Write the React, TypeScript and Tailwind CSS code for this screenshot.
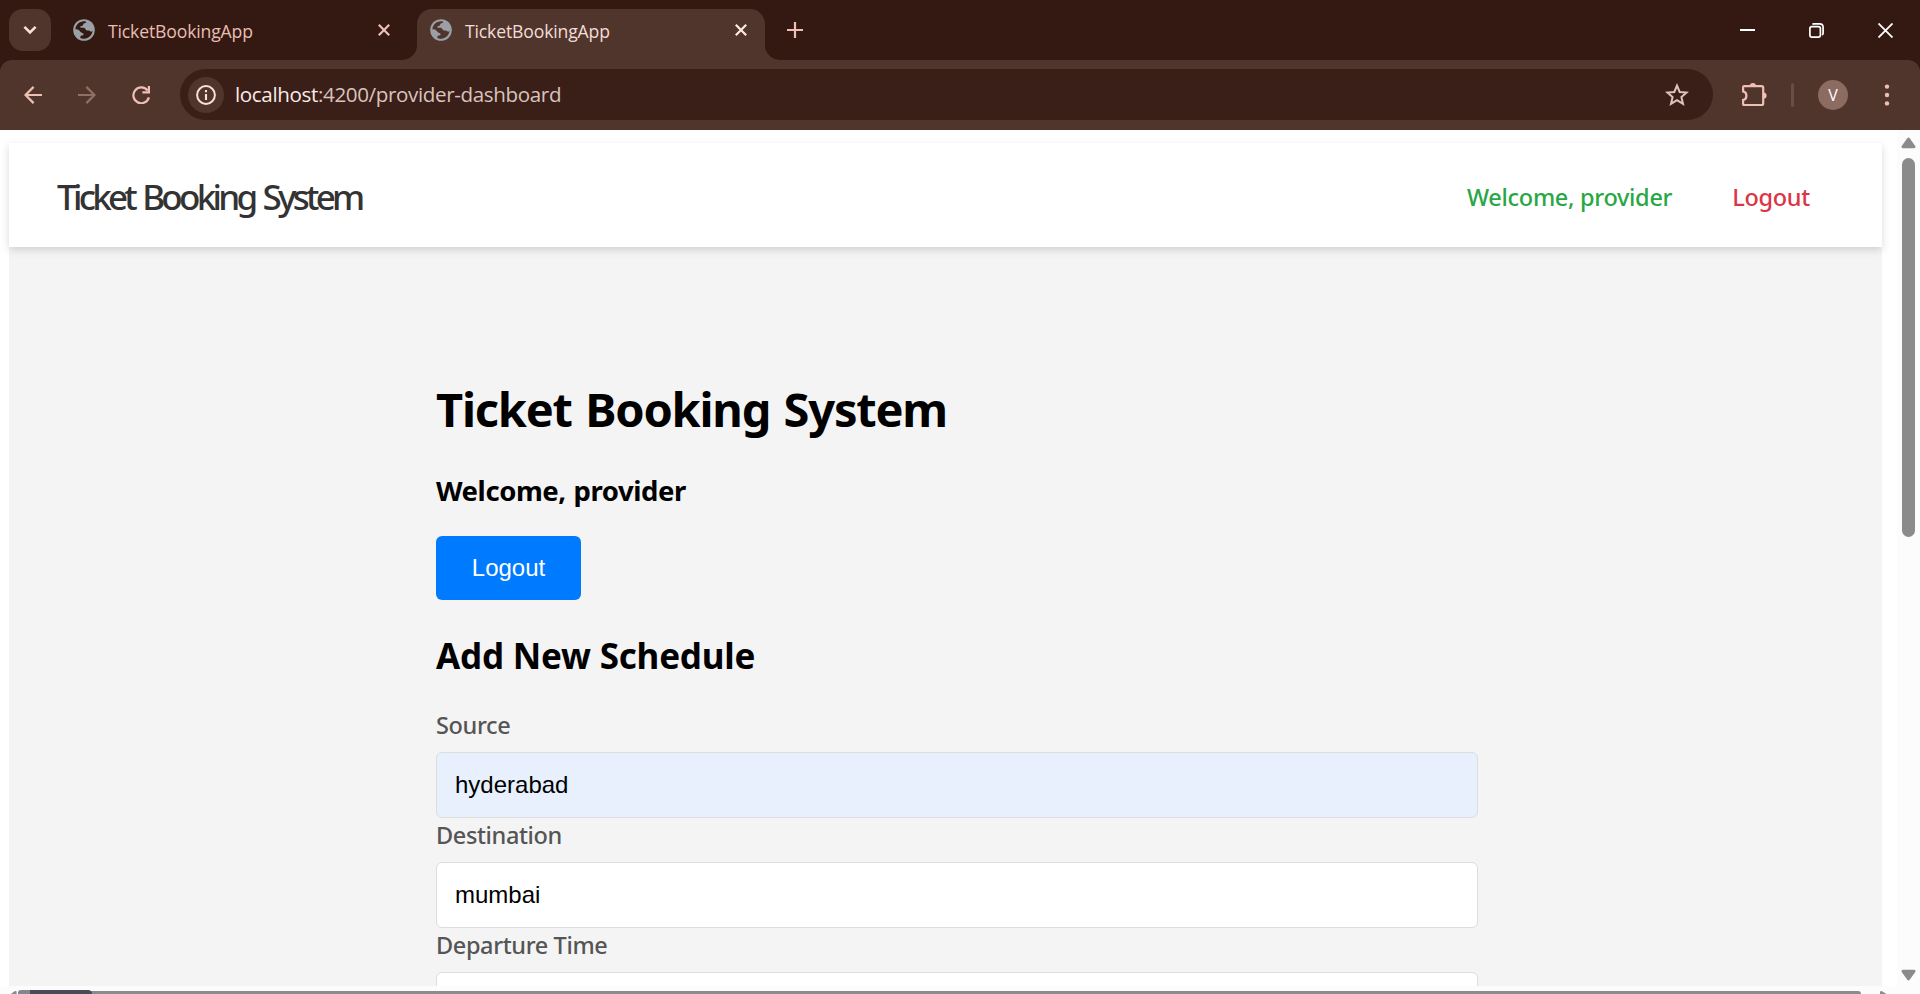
import type { ReactNode } from "react";

function Globe({ hole }: { hole: "dark" | "light" }) {
  const fill = hole === "dark" ? "fill-[#331912]" : "fill-[#50352d]";
  return (
    <svg viewBox="0 0 22 22" className="size-[22px] shrink-0">
      <circle cx="11" cy="11" r="10.8" className="fill-[#9aa0a6]" />
      <path
        className={fill}
        d="M2.4 10.2C2.8 5.6 6.4 2.3 11 2.2C12.4 2.2 13.2 2.6 13.3 3.3C13 4.3 11.6 4 10.8 4.6C10 5.3 10.4 6.3 9.4 6.8C8.4 7.2 7.2 7 7.1 8C7.2 9 9.2 8.6 10.9 8.8C12.6 9.2 12.2 10.6 13.2 11.2C14.6 11.8 16.4 11.2 17.2 12.2C18 12.9 18.6 12.8 19.6 11.8C19.2 16.2 15.6 19.6 11.2 19.7C9.6 19.7 8 19.4 7.2 18.7L7.6 17C8.6 16.4 10.2 16.8 10.6 15.6C10.8 14.2 9.4 14 8.4 13.4C6.8 12.6 6.2 10.8 4.8 10.4Z"
      />
    </svg>
  );
}

function Cross({ className }: { className: string }) {
  return (
    <svg viewBox="0 0 12 12" className={`size-3 shrink-0 ${className}`} fill="none" stroke="currentColor" strokeWidth="2.2">
      <path d="M0.8 0.8L11.2 11.2M11.2 0.8L0.8 11.2" />
    </svg>
  );
}

function TabTitle({ className }: { className: string }) {
  return (
    <span className={`ml-[13px] flex-1 pt-px text-[17.6px] leading-6 tracking-[-0.15px] whitespace-nowrap ${className}`}>
      TicketBookingApp
    </span>
  );
}

function TabStrip() {
  return (
    <div className="flex h-[60px] shrink-0 bg-[#50352d]">
      <div className="flex w-[417px] items-center rounded-br-[15px] bg-[#331912] pl-[9px]">
        <div className="flex size-[42px] items-center justify-center rounded-[14px] bg-[#50352d] text-[#f6e0da]">
          <svg viewBox="0 0 14 10" className="h-2.5 w-3.5" fill="none" stroke="currentColor" strokeWidth="2.6">
            <path d="M1.4 1.8L7 7.4L12.6 1.8" />
          </svg>
        </div>
        <div className="ml-[22px] flex flex-1 items-center pr-[27px]">
          <Globe hole="dark" />
          <TabTitle className="text-[#e8bfb3]" />
          <Cross className="text-[#efc1b5]" />
        </div>
      </div>
      <div className="flex w-[348px] bg-[#331912] pt-[9px]">
        <div className="flex flex-1 rounded-t-[15px] bg-[#50352d] pr-[18px] pb-[9px] pl-[13px]">
          <div className="flex flex-1 items-center">
            <Globe hole="light" />
            <TabTitle className="text-[#f3ddd6]" />
            <Cross className="text-[#fbeae4]" />
          </div>
        </div>
      </div>
      <div className="flex flex-1 items-center rounded-bl-[15px] bg-[#331912] pr-[27px] pl-[22px]">
        <svg viewBox="0 0 16 16" className="size-4 text-[#efbfb3]" fill="none" stroke="currentColor" strokeWidth="2.2">
          <path d="M8 0V16M0 8H16" />
        </svg>
        <div className="flex-1" />
        <div className="flex items-center gap-[54px] text-white">
          <svg viewBox="0 0 15 15" className="size-[15px]" stroke="currentColor" strokeWidth="2">
            <path d="M0 7H15" />
          </svg>
          <svg viewBox="0 0 15 15" className="size-[15px]" fill="none" stroke="currentColor" strokeWidth="1.7">
            <rect x="0.9" y="3.6" width="10.5" height="10.5" rx="2" />
            <path d="M3.4 1.4C4 0.9 4.4 0.9 5 0.9H10.6C12.6 0.9 14.1 2.4 14.1 4.4V10C14.1 10.6 14.1 11.4 13.2 12" />
          </svg>
          <svg viewBox="0 0 15 15" className="size-[15px]" stroke="currentColor" strokeWidth="1.8">
            <path d="M0.5 0.5L14.5 14.5M14.5 0.5L0.5 14.5" />
          </svg>
        </div>
      </div>
    </div>
  );
}

function Toolbar() {
  return (
    <div className="h-[70px] shrink-0 bg-[#331912]">
      <div className="flex h-full items-center rounded-t-[12px] bg-[#50352d] pl-6 text-[#efbfb3]">
        <svg viewBox="0 0 18 18" className="size-[18px]" fill="none" stroke="currentColor" strokeWidth="2.2">
          <path d="M18 9H2M9.6 0.9L1.5 9L9.6 17.1" />
        </svg>
        <svg viewBox="0 0 18 18" className="ml-9 size-[18px] text-[#906f67]" fill="none" stroke="currentColor" strokeWidth="2.2">
          <path d="M0 9H16M8.4 0.9L16.5 9L8.4 17.1" />
        </svg>
        <svg viewBox="0 0 18 18" className="ml-9 size-[18px]" fill="none" stroke="currentColor" strokeWidth="2.2">
          <path d="M15.6 4.6A7.9 7.9 0 1 0 16.9 11.4" />
          <path d="M16.9 0V6.3H10.4" />
        </svg>
        <div className="-mt-px ml-[30px] flex h-[51px] w-[1533px] items-center rounded-full bg-[#3a1f19] pr-[24px] pl-2">
          <div className="flex size-9 items-center justify-center rounded-full bg-[#50352d] text-[#f6e0da]">
            <svg viewBox="0 0 20 20" className="size-5">
              <circle cx="10" cy="10" r="8.9" fill="none" stroke="currentColor" strokeWidth="2" />
              <path d="M10 9V15M10 5V7.2" stroke="currentColor" strokeWidth="2.1" />
            </svg>
          </div>
          <div className="ml-[11px] flex-1 pb-px text-[20.6px] leading-7 tracking-[-0.37px] text-[#d9c3bc]">
            <span className="text-[#fbeae4]">localhost</span>:4200/provider-dashboard
          </div>
          <svg viewBox="0 0 24 24" className="size-6" fill="none" stroke="#dcc5be" strokeWidth="2">
            <path d="M12 2.6L14.7 9L21.6 9.6L16.4 14.1L18 20.9L12 17.2L6 20.9L7.6 14.1L2.4 9.6L9.3 9Z" />
          </svg>
        </div>
        <svg viewBox="0 0 26 26" className="-mt-[2px] ml-[28px] h-[26px] w-[26px]" fill="none" stroke="currentColor" strokeWidth="2.2">
          <path d="M3.2 5.2H20.6C21.6 5.2 22.2 5.8 22.2 6.8V22.4C22.2 23.4 21.6 24 20.6 24H3.2C2.4 24 2.1 23.6 2.1 22.8V19C4.2 18.6 5.4 17 5.4 14.7C5.4 12.4 4.2 10.8 2.1 10.4V6.4C2.1 5.6 2.4 5.2 3.2 5.2Z" />
          <path stroke="none" fill="currentColor" d="M8.8 5A3.1 3.1 0 0 1 15 5ZM22.4 11.4A3.1 3.1 0 0 1 22.4 17.8Z" />
        </svg>
        <div className="ml-[24px] h-6 w-[3px] rounded-full bg-[#6d4c44]" />
        <div className="ml-6 flex size-[30px] items-center justify-center rounded-full bg-[#8c6b61] text-[16px] leading-none text-white">
          V
        </div>
        <svg viewBox="0 0 6 22" className="ml-9 h-[22px] w-[6px]" fill="currentColor">
          <circle cx="3" cy="2.6" r="2.2" />
          <circle cx="3" cy="11" r="2.2" />
          <circle cx="3" cy="19.4" r="2.2" />
        </svg>
      </div>
    </div>
  );
}

function Field({ label, value, className }: { label: string; value: string; className: string }) {
  return (
    <div className="flex flex-col gap-[11px]">
      <label className="pt-[2px] text-[23.5px] leading-[31px] font-medium tracking-[-0.38px] text-[#555555]">{label}</label>
      <input
        readOnly
        value={value}
        className={`h-[66px] w-full rounded-[6px] border border-[#dddddd] px-[18px] font-['Liberation_Sans',Arial,sans-serif] text-[24px] text-black outline-none ${className}`}
      />
    </div>
  );
}

function Page({ children }: { children: ReactNode }) {
  return (
    <div className="flex min-w-0 flex-1 flex-col overflow-hidden bg-white pt-[13px] pr-[15px] pl-[9px]">
      {children}
    </div>
  );
}

export default function App() {
  return (
    <div className="flex h-[994px] w-[1920px] flex-col overflow-hidden bg-white font-['Open_Sans',sans-serif]">
      <TabStrip />
      <Toolbar />
      <div className="flex min-h-0 flex-1 font-['Noto_Sans',sans-serif]">
        <div className="flex min-w-0 flex-1 flex-col">
          <Page>
            <header className="z-10 flex h-[104px] shrink-0 items-center justify-between bg-white pr-[72px] pl-12 shadow-[0_3px_8px_rgba(0,0,0,0.15)]">
              <div className="pt-[3px] text-[35px] leading-[48px] font-medium tracking-[-3.72px] text-[#333333] [word-spacing:2.7px]">
                Ticket Booking System
              </div>
              <nav className="flex gap-[60px] pt-[3px] text-[23.5px] leading-8 font-medium tracking-[-0.3px]">
                <span className="text-[#28a745]">Welcome, provider</span>
                <span className="text-[#dc3545]">Logout</span>
              </nav>
            </header>
            <main className="min-h-0 flex-1 overflow-hidden bg-[#f4f4f4] pt-[130px]">
              <div className="ml-[427px] flex w-[1042px] flex-col items-start text-black">
                <h1 className="text-[47px] leading-[64px] font-bold tracking-[-1.22px] [word-spacing:2.5px]">Ticket Booking System</h1>
                <h3 className="mt-[31px] text-[27.5px] leading-[37px] font-bold tracking-[-0.42px] [word-spacing:1px]">Welcome, provider</h3>
                <button className="mt-[27px] h-16 w-[145px] rounded-[6px] bg-[#007bff] font-['Liberation_Sans',Arial,sans-serif] text-[24px] text-white">
                  Logout
                </button>
                <h2 className="mt-8 text-[35px] leading-[48px] font-bold tracking-[-0.2px]">Add New Schedule</h2>
                <div className="mt-[28px] w-full">
                  <Field label="Source" value="hyderabad" className="bg-[#e8f0fe]" />
                  <Field label="Destination" value="mumbai" className="bg-white" />
                  <Field label="Departure Time" value="" className="bg-white" />
                </div>
              </div>
            </main>
          </Page>
          <div className="flex h-2 shrink-0 items-end overflow-hidden bg-[#fcfcfc]">
            <svg viewBox="0 0 18 4" className="h-1 w-[18px]" fill="#8b8b8b">
              <path d="M11 4L14.5 1.2Q16.4 0.4 16.6 1.6V4Z" />
            </svg>
            <div className="h-[3px] flex-1 rounded-t-[4px] bg-[#8b8b8b]">
              <div className="-mt-px h-1 w-[74px] rounded-tl-[8px] rounded-tr-[10px] border-l-[12px] border-[#85858d] bg-[#4b4b56]" />
            </div>
            <svg viewBox="0 0 36 4" className="h-1 w-9" fill="#8b8b8b">
              <path d="M19 4V2Q19.6 0.4 21 1.2L25.5 4Z" />
            </svg>
          </div>
        </div>
        <div className="flex w-[23px] shrink-0 flex-col items-center bg-[#fcfcfc] pt-[7px] pb-[13px] text-[#8b8b8b]">
          <svg viewBox="0 0 15 12" className="h-3 w-[15px]" fill="currentColor">
            <path d="M6.3 1.3Q7.5 -0.2 8.7 1.3L14.3 9Q15 11 13.2 11.2H1.8Q0 11 0.7 9Z" />
          </svg>
          <div className="mt-[9px] h-[379px] w-[13px] rounded-full bg-[#8b8b8b]" />
          <div className="flex-1" />
          <svg viewBox="0 0 15 12" className="h-3 w-[15px]" fill="currentColor">
            <path d="M6.3 10.7Q7.5 12.2 8.7 10.7L14.3 3Q15 1 13.2 0.8H1.8Q0 1 0.7 3Z" />
          </svg>
        </div>
      </div>
    </div>
  );
}
